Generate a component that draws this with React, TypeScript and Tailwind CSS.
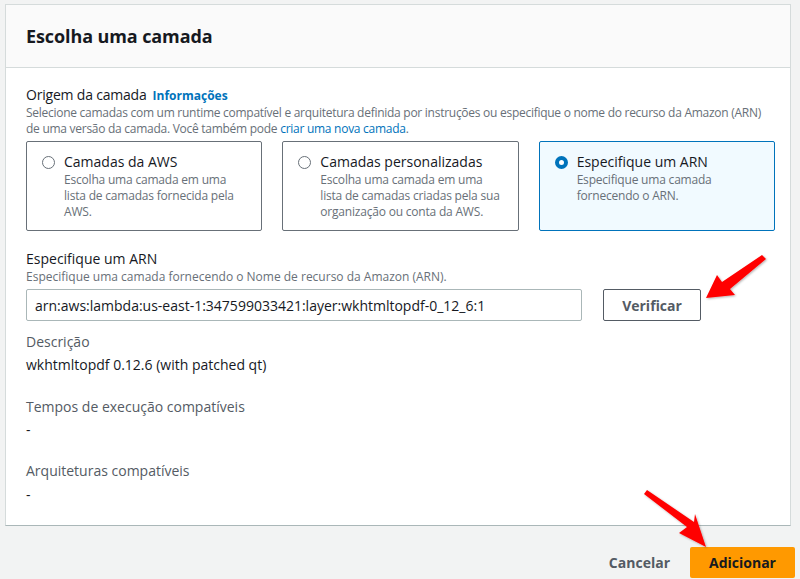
import { useState } from "react";

type LayerSource = {
  id: string;
  title: string;
  description: string;
};

const sources: LayerSource[] = [
  {
    id: "aws",
    title: "Camadas da AWS",
    description: "Escolha uma camada em uma lista de camadas fornecida pela AWS.",
  },
  {
    id: "custom",
    title: "Camadas personalizadas",
    description: "Escolha uma camada em uma lista de camadas criadas pela sua organização ou conta da AWS.",
  },
  {
    id: "arn",
    title: "Especifique um ARN",
    description: "Especifique uma camada fornecendo o ARN.",
  },
];

const Radio = ({ checked }: { checked: boolean }) =>
  checked ? (
    <span className="mt-[4px] block h-[13px] w-[13px] shrink-0 rounded-full border-[4px] border-[#0073bb] bg-white" />
  ) : (
    <span className="mt-[4px] block h-[13px] w-[13px] shrink-0 rounded-full border-[1.5px] border-[#687078] bg-white" />
  );

const App = () => {
  const [source, setSource] = useState("arn");
  const [arn, setArn] = useState("arn:aws:lambda:us-east-1:347599033421:layer:wkhtmltopdf-0_12_6:1");

  return (
    <div
      className="relative min-h-[579px] bg-[#f2f3f3] pt-[4px] text-[#16191f]"
      style={{ fontFamily: '"Open Sans", "Noto Sans", sans-serif' }}
    >
      {/* Modal card */}
      <div className="ml-[5px] mr-[9px] border border-[#d5dbdb] border-b-[#aab7b8] bg-white">
        <div className="flex h-[63px] items-center border-b border-[#d5dbdb] bg-[#fafafa] px-[20px]">
          <h1 className="text-[18px] font-bold tracking-[-0.1px]">Escolha uma camada</h1>
        </div>

        <div className="pb-[20px] pl-[20px] pr-[15px] pt-[17px]">
          {/* Layer source */}
          <div className="flex items-baseline">
            <span className="text-[14px] leading-[20px] tracking-[-0.2px]">Origem da camada</span>
            <a className="ml-[6px] text-[12px] font-bold text-[#0073bb]">Informações</a>
          </div>
          <p className="text-[12px] leading-[16px] tracking-[-0.27px] text-[#687078]">
            Selecione camadas com um runtime compatível e arquitetura definida por instruções ou especifique o nome do recurso da Amazon (ARN)
            de uma versão da camada. Você também pode <span className="text-[#0073bb]">criar uma nova camada</span>.
          </p>

          <div className="mt-[4px] grid grid-cols-3 gap-[20px]">
            {sources.map((s) => {
              const active = s.id === source;
              return (
                <div
                  key={s.id}
                  onClick={() => setSource(s.id)}
                  className={
                    active
                      ? "flex h-[90px] cursor-pointer gap-[9px] rounded-[2px] border border-[#0073bb] bg-[#f1faff] pl-[15px] pr-[4px] pt-[10px]"
                      : "flex h-[90px] cursor-pointer gap-[9px] rounded-[2px] border border-[#687078] bg-white pl-[15px] pr-[4px] pt-[10px]"
                  }
                >
                  <Radio checked={active} />
                  <div className="max-w-[184px]">
                    <div className="text-[14px] leading-[20px]">{s.title}</div>
                    <div className="text-[12px] leading-[16px] tracking-[-0.2px] text-[#687078]">{s.description}</div>
                  </div>
                </div>
              );
            })}
          </div>

          {/* ARN field */}
          <div className="mt-[18px] text-[14px] leading-[20px]">Especifique um ARN</div>
          <div className="text-[12px] leading-[16px] text-[#687078]">
            Especifique uma camada fornecendo o Nome de recurso da Amazon (ARN).
          </div>
          <div className="mt-[4px] flex gap-[21px]">
            <input
              value={arn}
              onChange={(e) => setArn(e.target.value)}
              className="h-[32px] w-[556px] rounded-[2px] border border-[#aab7b8] px-[8px] text-[14px] text-[#16191f] outline-none"
            />
            <button className="h-[32px] w-[98px] rounded-[2px] border border-[#545b64] bg-white text-[14px] font-bold text-[#545b64]">
              Verificar
            </button>
          </div>

          {/* Layer details */}
          <div className="mt-[11px] text-[14px] leading-[20px] text-[#545b64]">Descrição</div>
          <div className="mt-[3px] text-[14px] leading-[20px]">wkhtmltopdf 0.12.6 (with patched qt)</div>

          <div className="mt-[22px] text-[14px] leading-[20px] text-[#545b64]">Tempos de execução compatíveis</div>
          <div className="mt-[3px] text-[14px] leading-[20px]">-</div>

          <div className="mt-[21px] text-[14px] leading-[20px] text-[#545b64]">Arquiteturas compatíveis</div>
          <div className="mt-[4px] text-[14px] leading-[20px]">-</div>
        </div>
      </div>

      {/* Footer actions */}
      <div className="mr-[5px] mt-[21px] flex items-center justify-end">
        <button className="px-[20px] text-[14px] font-bold text-[#545b64]">Cancelar</button>
        <button className="h-[31px] w-[105px] rounded-[2px] bg-[#ff9900] text-[14px] font-bold text-[#16191f]">
          Adicionar
        </button>
      </div>

      {/* Callout arrows */}
      <svg className="pointer-events-none absolute left-0 top-0" width="800" height="579" viewBox="0 0 800 579">
        <defs>
          <filter id="arrowShadow" x="-20%" y="-20%" width="140%" height="140%">
            <feDropShadow dx="1" dy="1" stdDeviation="1" floodColor="#000" floodOpacity="0.3" />
          </filter>
        </defs>
        <polygon
          points="706,298 717,275 722,282 762,255 766,259 730,289 735,295"
          fill="#ff0000"
          filter="url(#arrowShadow)"
        />
        <polygon
          points="706,547 679,533 687,527 644,494 647,490 694,522 695,514"
          fill="#ff0000"
          filter="url(#arrowShadow)"
        />
      </svg>
    </div>
  );
};

export default App;
